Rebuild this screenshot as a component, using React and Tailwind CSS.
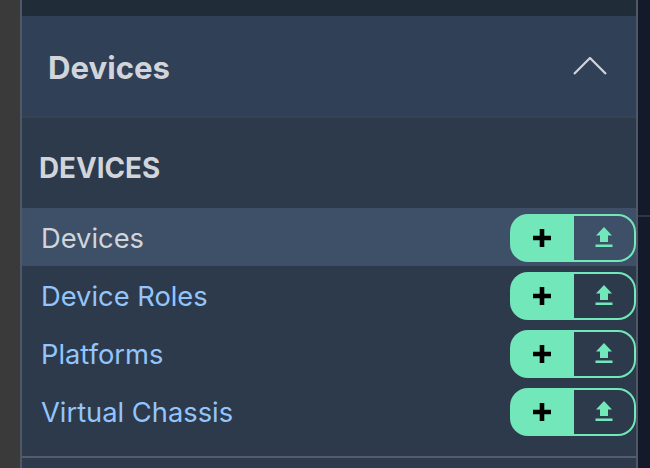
import React from "react";

const items = [
  { label: "Devices", active: true },
  { label: "Device Roles" },
  { label: "Platforms" },
  { label: "Virtual Chassis" },
];

function PlusIcon() {
  return (
    <svg width="20" height="20" viewBox="0 0 20 20">
      <path d="M10 1v18M1 10h18" stroke="#000" strokeWidth="4.6" />
    </svg>
  );
}

function UploadIcon() {
  return (
    <svg className="-mt-0.5" width="18" height="20" viewBox="0 0 18 20" fill="#72e8ba">
      <path d="M9 0l8 8.5h-4V15H5V8.5H1z" />
      <rect x="0.5" y="17.5" width="17" height="2.5" />
    </svg>
  );
}

function MenuRow({ label, active }) {
  return (
    <div className={`h-[58px] pt-0.5 flex items-center justify-between ${active ? "bg-[#3e5068]" : ""}`}>
      <span className={`pl-[19px] pt-0.5 text-[27.3px] ${active ? "text-[#d1d5db]" : "text-[#93c5fd]"}`}>{label}</span>
      <div className="flex h-12 w-[126px] shrink-0">
        <div className="w-16 bg-[#72e8ba] rounded-l-[18px] flex items-center justify-center">
          <PlusIcon />
        </div>
        <div className="flex-1 border-2 border-l-0 border-[#72e8ba] rounded-r-[18px] flex items-center justify-center">
          <UploadIcon />
        </div>
      </div>
    </div>
  );
}

export default function App() {
  return (
    <div className="h-[468px] w-[650px] overflow-hidden flex bg-[#141a29] font-['Inter',sans-serif]">
      <div className="w-5 bg-[#3a3a3a] shrink-0" />
      <div className="w-[618px] shrink-0 border-x-2 border-[#4f5866] bg-[#2d3a4c] flex flex-col">
        <div className="h-4 bg-[#212c39] shrink-0" />
        <div className="h-[102px] shrink-0 bg-[#2f4057] border-b-2 border-[#374253] flex items-center justify-between pl-[26px] pr-[29px]">
          <span className="pt-1 text-[31.2px] font-bold text-[#d1d5db]">Devices</span>
          <svg width="34" height="18" viewBox="0 0 34 18" fill="none" stroke="#d1d5db" strokeWidth="2.2">
            <path d="M1 17L17 1l16 16" />
          </svg>
        </div>
        <div className="h-[90px] shrink-0 flex items-center pl-[17px] pt-3">
          <span className="text-[27.8px] font-bold text-[#d1d5db]">DEVICES</span>
        </div>
        {items.map((item) => (
          <MenuRow key={item.label} label={item.label} active={item.active} />
        ))}
        <div className="mt-4 h-0.5 bg-[#555d6b] shrink-0" />
      </div>
      <div className="flex-1">
        <div className="mt-[215px] h-0.5 bg-[#2d3748]" />
      </div>
    </div>
  );
}
